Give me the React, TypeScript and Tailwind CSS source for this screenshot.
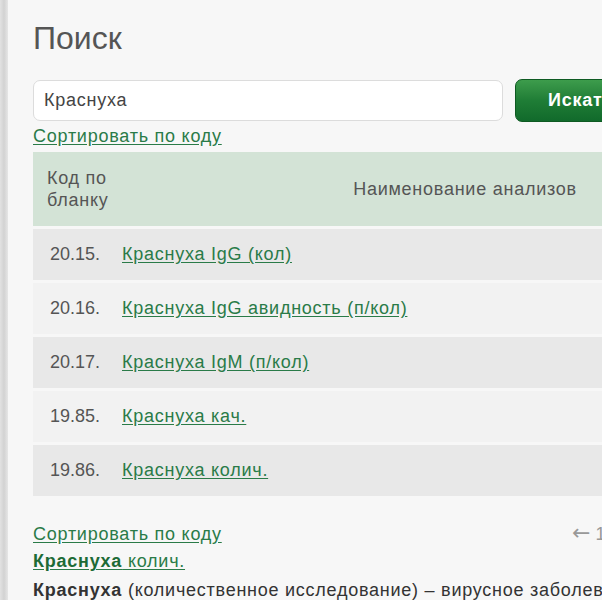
import React from "react";

const rows = [
  { code: "20.15.", name: "Краснуха IgG (кол)" },
  { code: "20.16.", name: "Краснуха IgG авидность (п/кол)" },
  { code: "20.17.", name: "Краснуха IgM (п/кол)" },
  { code: "19.85.", name: "Краснуха кач." },
  { code: "19.86.", name: "Краснуха колич." },
];

export default function App() {
  return (
    <div
      className="w-[602px] h-[600px] overflow-hidden flex bg-[#f7f7f7]"
      style={{ fontFamily: '"Liberation Sans", Arial, sans-serif' }}
    >
      <div className="w-[8px] shrink-0 bg-gradient-to-r from-[#e2e2e2] via-[#d2d2d2] to-[#e6e6e6]" />
      <div className="flex-1 pl-[25px] pt-[20px] min-w-0">
        <div className="w-[775px] tracking-[0.75px]">
          <h1 className="text-[32px] leading-[36px] text-[#555] font-normal tracking-normal">Поиск</h1>
          <div className="flex items-center mt-[23px] gap-[12px]">
            <div className="w-[470px] h-[41px] bg-white border border-[#dcdcdc] rounded-[7px] flex items-center pl-[10px] text-[18px] text-[#444]">
              Краснуха
            </div>
            <div className="w-[140px] h-[43px] rounded-[7px] border border-[#0e5a22] bg-gradient-to-b from-[#3d9c4c] via-[#1f7d36] to-[#116a2b] flex items-center pl-[32px] text-white font-bold text-[18px]">
              Искать
            </div>
          </div>
          <div className="mt-[4px] text-[18px] leading-[20px]">
            <a className="text-[#2a7b48] underline underline-offset-[2px]">Сортировать по коду</a>
          </div>
          <div className="mt-[6px] flex flex-col gap-[3px]">
            <div className="h-[74px] bg-[#d3e3d6] flex items-center text-[18px] leading-[22px] text-[#555]">
              <div className="w-[89px] pl-[14px]">
                Код по
                <br />
                бланку
              </div>
              <div className="flex-1 text-center">Наименование анализов</div>
            </div>
            {rows.map((r, i) => (
              <div
                key={r.code}
                className={`h-[51px] flex items-center text-[18px] ${i % 2 === 0 ? "bg-[#e8e8e8]" : "bg-[#f2f2f2]"}`}
              >
                <div className="w-[89px] pl-[17px] text-[#555] tracking-normal">{r.code}</div>
                <a className="text-[#2a7b48] underline underline-offset-[2px]">{r.name}</a>
              </div>
            ))}
          </div>
          <div className="mt-[27px] grid grid-cols-[539px_auto] items-center text-[18px] leading-[20px]">
            <a className="text-[#2a7b48] underline underline-offset-[2px]">Сортировать по коду</a>
            <span className="text-[#999] whitespace-nowrap tracking-normal">
              <span className="font-['DejaVu_Sans'] text-[22px] leading-[20px]">←</span> 1
            </span>
          </div>
          <div className="mt-[7px] text-[18px] leading-[20px]">
            <a className="text-[#2a7b48] underline underline-offset-[2px]">
              <b className="text-[#1d6b36]">Краснуха</b> колич.
            </a>
          </div>
          <div className="mt-[9px] text-[18px] leading-[20px] text-[#333] whitespace-nowrap">
            <b>Краснуха</b> (количественное исследование) – вирусное заболевание
          </div>
        </div>
      </div>
    </div>
  );
}
